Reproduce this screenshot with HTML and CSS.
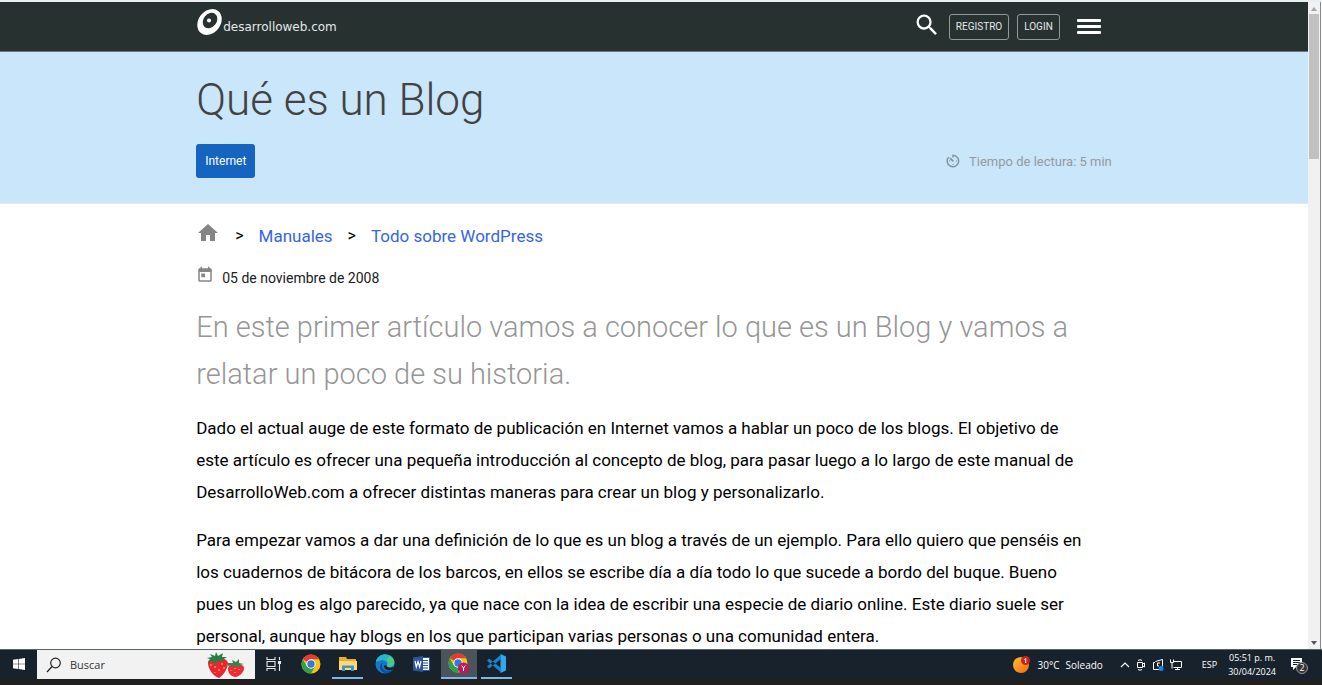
FILE: index.html
```html
<!DOCTYPE html>
<html lang="es">
<head>
<meta charset="utf-8">
<meta name="viewport" content="width=device-width, initial-scale=1">
<title>Qué es un Blog</title>
<link rel="stylesheet" href="styles.css">
</head>
<body>
<div class="browser">
  <div class="page">
    <header class="site-header">
      <div class="container header-row">
        <a class="logo" href="#">
          <svg width="27" height="28" viewBox="0 0 27 28" aria-hidden="true">
            <g transform="rotate(38 13.500 14)">
              <ellipse cx="13.500" cy="14" rx="11" ry="14" fill="#fff"/>
              <ellipse cx="13" cy="12.500" rx="6.600" ry="8.400" fill="#263130"/>
            </g>
            <circle cx="13" cy="12.500" r="2.100" fill="#fff"/>
          </svg>
          <span class="logo-text">desarrolloweb.com</span>
        </a>
        <nav class="header-actions">
          <button class="icon-button" aria-label="Buscar">
            <svg width="28" height="28" viewBox="0 0 24 24" fill="#fff"><path d="M15.500 14h-.79l-.28-.27A6.471 6.471 0 0 0 16 9.500 6.500 6.500 0 1 0 9.500 16c1.610 0 3.090-.59 4.230-1.570l.27.28v.79l5 4.990L20.490 19l-4.990-5zm-6 0C7.010 14 5 11.990 5 9.500S7.010 5 9.500 5 14 7.010 14 9.500 11.990 14 9.500 14z"/></svg>
          </button>
          <a class="outline-button" href="#">REGISTRO</a>
          <a class="outline-button" href="#">LOGIN</a>
          <button class="menu-button" aria-label="Menú"><span></span><span></span><span></span></button>
        </nav>
      </div>
    </header>
    <section class="hero">
      <div class="container">
        <h1 class="title">Qué es un Blog</h1>
        <div class="hero-meta">
          <a class="tag" href="#">Internet</a>
          <p class="reading">
            <svg width="14" height="14" viewBox="0 0 24 24" fill="none" stroke="#84919a" stroke-width="2.400" aria-hidden="true"><path d="M12 6V2.200A9.800 9.800 0 1 1 4.800 5.200"/><path d="M7 7l5.500 5.500" stroke-width="3"/><path d="M17 12h2M11 18h2M5 12h2" stroke-width="2"/></svg>
            <span>Tiempo de lectura: 5 min</span>
          </p>
        </div>
      </div>
    </section>
    <main class="container article">
      <nav class="breadcrumb" aria-label="Ruta">
        <a class="home" href="#" aria-label="Inicio"><svg width="24" height="24" viewBox="0 0 24 24" fill="#858585"><path d="M10 20v-6h4v6h5v-8h3L12 3 2 12h3v8z"/></svg></a>
        <span class="separator">&gt;</span>
        <a href="#">Manuales</a>
        <span class="separator">&gt;</span>
        <a href="#">Todo sobre WordPress</a>
      </nav>
      <p class="date">
        <svg width="18" height="18" viewBox="0 0 24 24" fill="#858585" aria-hidden="true"><path d="M19 3h-1V1h-2v2H8V1H6v2H5c-1.110 0-2 .9-2 2v14a2 2 0 0 0 2 2h14c1.100 0 2-.9 2-2V5c0-1.100-.9-2-2-2zm0 16H5V8h14v11zM7 10h5v5H7z"/></svg>
        <time datetime="2008-11-05">05 de noviembre de 2008</time>
      </p>
      <p class="lead">En este primer artículo vamos a conocer lo que es un Blog y vamos a relatar un poco de su historia.</p>
      <p class="text">Dado el actual auge de este formato de publicación en Internet vamos a hablar un poco de los blogs. El objetivo de este artículo es ofrecer una pequeña introducción al concepto de blog, para pasar luego a lo largo de este manual de DesarrolloWeb.com a ofrecer distintas maneras para crear un blog y personalizarlo.</p>
      <p class="text">Para empezar vamos a dar una definición de lo que es un blog a través de un ejemplo. Para ello quiero que penséis en los cuadernos de bitácora de los barcos, en ellos se escribe día a día todo lo que sucede a bordo del buque. Bueno pues un blog es algo parecido, ya que nace con la idea de escribir una especie de diario online. Este diario suele ser personal, aunque hay blogs en los que participan varias personas o una comunidad entera.</p>
    </main>
  </div>
  <div class="scrollbar" aria-hidden="true">
    <span class="arrow arrow-up"></span>
    <span class="thumb"></span>
    <span class="arrow arrow-down"></span>
  </div>
</div>
<footer class="taskbar">
  <button class="task start" aria-label="Inicio">
    <svg width="12" height="12" viewBox="0 0 12 12" fill="#fff"><path d="M0 1.700l5-.7v4.700H0zM5.600.9L12 0v5.700H5.600zM0 6.300h5V11l-5-.7zM5.600 6.300H12V12l-6.400-.9z"/></svg>
  </button>
  <div class="search">
    <svg width="16" height="16" viewBox="0 0 16 16" fill="none" stroke="#222" stroke-width="1.200" aria-hidden="true"><circle cx="9.500" cy="6" r="4.800"/><path d="M6 9.500L1 15"/></svg>
    <input type="text" placeholder="Buscar" aria-label="Buscar">
    <svg width="38" height="26" viewBox="0 0 38 26" aria-hidden="true">
      <path d="M1 11c0-4 5-6 9-5 5-1 10 1 11 5 0 5-5 13-9 15C6 24 1 17 1 11z" fill="#ea2633"/>
      <path d="M21 17c0-4 4-5 8-5s8 1 8 4c0 4-4 8-8 9-5 0-8-4-8-8z" fill="#ef2b35"/>
      <path d="M0 6l5-1-2-3 5 2 1-4 2 4 5-3-1 4 5 0-5 3 2 2-6-1-3 3-2-3-5 2 2-4z" fill="#287f45"/>
      <path d="M21 11l5 0-1-3 4 2 3-3 0 4 5 1-4 1 1 2-5-1-3 2-1-3-4 1z" fill="#36834b"/>
      <path d="M4 12v2M8 14v2M15 11v2M12 17v2M17 15v2M8 20v1M24 18v1M28 20v1M32 17v1M28 16v1" stroke="#ffb04d" stroke-width="1.200"/>
    </svg>
  </div>
  <nav class="tasks">
    <button class="task" aria-label="Vista de tareas">
      <svg width="16" height="14" viewBox="0 0 16 14" fill="none" stroke="#e5e7e9" stroke-width="1.100"><path d="M1 0v2.500h8V0M1 14v-2.500h8V14M1 4.500h8v5H1zM13.500 0v3M13.500 7v7"/><path d="M12.500 4.500h2v2h-2z" fill="#e5e7e9"/></svg>
    </button>
    <button class="task" aria-label="Chrome">
      <svg width="20" height="20" viewBox="0 0 20 20"><circle cx="10" cy="10" r="9.500" fill="#fbc116"/><path d="M10 10L1.770 5.250A9.500 9.500 0 0 1 18.230 5.250H10z" fill="#e33b2e"/><path d="M1.770 5.250A9.500 9.500 0 0 0 10 19.500l4.100-7.100L10 10 5.900 12.400z" fill="#2da24c"/><circle cx="10" cy="10" r="4.700" fill="#fff"/><circle cx="10" cy="10" r="3.700" fill="#3478df"/></svg>
    </button>
    <button class="task open" aria-label="Explorador de archivos">
      <svg width="18" height="16" viewBox="0 0 18 16"><path d="M0 1h7l1 2h9v11H0z" fill="#e8ad31"/><path d="M0 5h18v9H0z" fill="#ffda70"/><path d="M3 15V9.500h12V15h-3v-3H6v3z" fill="#3b95d5"/></svg>
    </button>
    <button class="task" aria-label="Edge">
      <svg width="20" height="20" viewBox="0 0 20 20"><circle cx="10" cy="10" r="9.500" fill="#1678c8"/><path d="M1 8C2 3 6 .5 10.500.5c5.500 0 9 4 9 7.800 0 3.200-2.500 4.700-5 4.700-2 0-3.500-.8-2.300-2.200C13.500 8 10.500 6 7.500 6 4.500 6 2 7 1 8z" fill="#4bc98b"/><path d="M1 8C2 3 6 .5 10 .5c2 0 4 .6 5 1.500C12 4 12 5 12 8 10 5.500 4 5 1 8z" fill="#24b4d4"/><path d="M8 8.500c-3 3.500.5 9.500 7 8.500l3-1.500C14 21 6 20 5 14c-.3-3 1-5 3-5.500z" fill="#114e99"/><path d="M11.500 11c-.5 3 4 3.500 8 1.500l-1 2.500c-4 2.500-10 1-9.500-3.500z" fill="#18222c"/></svg>
    </button>
    <button class="task" aria-label="Word">
      <svg width="17" height="16" viewBox="0 0 17 16"><path d="M8 1.500h8.500v13H8z" fill="#f2f5fa" stroke="#2b579a"/><path d="M10 4.500h5M10 7h5M10 9.500h5M10 12h5" stroke="#2b579a"/><path d="M0 1.500L10 0v16L0 14.500z" fill="#2b579a"/><path d="M2 5l1.300 6L5 5.500 6.600 11 8 5" fill="none" stroke="#fff" stroke-width="1.200"/></svg>
    </button>
    <button class="task open active" aria-label="Chrome, perfil Y">
      <svg width="22" height="22" viewBox="0 0 22 22"><circle cx="10" cy="10" r="9.500" fill="#fbc116"/><path d="M10 10L1.770 5.250A9.500 9.500 0 0 1 18.230 5.250H10z" fill="#e33b2e"/><path d="M1.770 5.250A9.500 9.500 0 0 0 10 19.500l4.100-7.100L10 10 5.900 12.400z" fill="#2da24c"/><circle cx="10" cy="10" r="4.700" fill="#fff"/><circle cx="10" cy="10" r="3.700" fill="#3478df"/><circle cx="15.500" cy="15" r="5.500" fill="#c2185b"/><path d="M13.700 12.500l1.800 2.700 1.800-2.700M15.500 15v3" fill="none" stroke="#fff"/></svg>
    </button>
    <button class="task open" aria-label="Visual Studio Code">
      <svg width="19" height="19" viewBox="0 0 19 19"><path d="M13.500 0L19 2.500v14L13.500 19z" fill="#2fa8ee"/><path d="M14 .5L0 12.500l2 2L14 5zM14 18.500L0 6.500l2-2L14 14z" fill="#1683ca"/></svg>
    </button>
  </nav>
  <div class="tray">
    <button class="weather">
      <svg width="18" height="17" viewBox="0 0 18 17" aria-hidden="true"><defs><linearGradient id="sun" x1="0" y1="0" x2="1" y2="1"><stop offset="0" stop-color="#ffbd36"/><stop offset="1" stop-color="#f26a0a"/></linearGradient></defs><circle cx="8" cy="9" r="8" fill="url(#sun)"/><circle cx="12.500" cy="4.500" r="4.500" fill="#c9251d"/><path d="M11.500 3.500l1.200-1v4.500" fill="none" stroke="#fff"/></svg>
      <span>30°C</span><span>Soleado</span>
    </button>
    <div class="status" aria-hidden="true">
      <svg width="10" height="14" viewBox="0 0 10 14" fill="none" stroke="#fff" stroke-width="1.100"><path d="M1 9l4-4 4 4"/></svg>
      <svg width="10" height="14" viewBox="0 0 10 14" fill="none" stroke="#fff"><path d="M1.500 4.500h5v5h-5zM6.500 6l2-1v4l-2-1M2 2.500Q4 1 6 2.500M2 11.500Q4 13 6 11.500"/></svg>
      <svg width="12" height="14" viewBox="0 0 12 14" fill="none" stroke="#fff"><path d="M7 11.500H1.500v-7H3M3.500 3.500l7-2v7M8 5H5.500v3H7"/><circle cx="9" cy="10.500" r="2.500" fill="#1687e0" stroke="none"/></svg>
      <svg width="12" height="14" viewBox="0 0 12 14" fill="none" stroke="#fff"><path d="M4 3.500h7.500v6H3.500M7.500 9.500v2M5 11.500h5M.5 1.500v3h3v-3M2 4.500v6"/></svg>
    </div>
    <button class="language">ESP</button>
    <time class="clock" datetime="2024-04-30T17:51"><span>05:51 p. m.</span><span>30/04/2024</span></time>
    <button class="notices" aria-label="Notificaciones">
      <svg width="18" height="18" viewBox="0 0 18 18"><path d="M1 2h11v9H6l-3 3v-3H1z" fill="#fff"/><path d="M3 4.500h7M3 6.500h7M3 8.500h4" stroke="#18222c"/></svg>
      <span class="badge">2</span>
    </button>
  </div>
</footer>
</body>
</html>
```
FILE: styles.css
```css
* { box-sizing: border-box; }

body {
  display: flex;
  flex-direction: column;
  height: 100vh;
  margin: 0;
  overflow: hidden;
  background: #fff;
  color: #000;
  font-family: Roboto, "Liberation Sans", sans-serif;
}

h1, p { margin: 0; }
a { color: #3565e8; text-decoration: none; }
button { border: 0; padding: 0; background: none; color: inherit; font: inherit; }
svg { display: block; flex: none; }

.browser {
  display: flex;
  flex: 1;
  min-height: 0;
  border-top: 2px solid #e9eef3;
}
.page { flex: 1; min-width: 0; overflow: hidden; }
.container { width: 70%; margin: 0 auto; }

.site-header {
  background: #263130;
  border-bottom: 1px solid #65777f;
}
.header-row {
  display: flex;
  align-items: center;
  justify-content: space-between;
  height: 49px;
}
.logo { display: flex; align-items: center; margin-bottom: 9px; color: #e4e8e8; }
.logo-text { margin-top: 9px; font: 12px "DejaVu Sans", sans-serif; }
.header-actions { display: flex; align-items: center; gap: 8px; margin-right: 11px; color: #e6e9e9; }
.icon-button { margin-bottom: 4px; }
.outline-button {
  padding: 0 6px;
  border: 1px solid #929998;
  border-radius: 3px;
  color: inherit;
  font-size: 10px;
  line-height: 24px;
}
.menu-button { display: grid; gap: 3px; width: 24px; margin-left: 9px; }
.menu-button span { height: 3px; border-radius: 1px; background: #fff; }

.hero { padding: 20px 0 25px; background: #c9e6fb; border-bottom: 1px solid #e2e9ee; }
.title { color: #424242; font-size: 44px; font-weight: 300; line-height: 56px; }
.hero-meta { display: flex; align-items: center; justify-content: space-between; margin-top: 16px; }
.tag { padding: 0 9px; border-radius: 3px; background: #1565c0; color: #fff; font-size: 12px; line-height: 34px; }
.reading { display: flex; align-items: center; gap: 9px; color: #949a9f; font-size: 13px; }

.article { padding-top: 16px; }
.breadcrumb { display: flex; align-items: center; gap: 15px; font-size: 17px; line-height: 32px; }
.home { margin-bottom: 6px; }
.separator { font-size: 16px; }
.date { display: flex; align-items: center; gap: 8px; margin-top: 14px; color: #202020; font-size: 14px; line-height: 24px; }
.date svg { margin-bottom: 6px; }
.lead { margin-top: 14px; color: #969696; font-size: 29px; font-weight: 300; line-height: 47px; }
.text { margin-top: 14px; padding-right: 24px; font-size: 17px; line-height: 32px; }
.text + .text { margin-top: 16px; }

.scrollbar {
  display: flex;
  flex-direction: column;
  align-items: center;
  width: 13px;
  margin-right: 1px;
  border-right: 1px solid #888;
  background: #f1f1f1;
}
.arrow { width: 6px; height: 4px; }
.arrow-up { margin: 5px 0 3px; background: #a5a5a5; clip-path: polygon(50% 0, 100% 100%, 0 100%); }
.arrow-down { margin: auto 0 4px; background: #555; clip-path: polygon(0 0, 100% 0, 50% 100%); }
.thumb { width: 10px; height: 22.400%; background: #c1c1c1; }

.taskbar {
  display: flex;
  height: 36px;
  border-top: 1px solid #59636a;
  border-bottom: 6px solid #202020;
  background: #18222c;
  color: #fff;
  font: 11px "Open Sans", "Noto Sans", sans-serif;
}
.task { display: grid; place-items: center; width: 31px; border-bottom: 1px solid transparent; }
.start { width: 37px; }
.search {
  display: flex;
  align-items: center;
  gap: 8px;
  width: 218px;
  padding: 0 10px 0 9px;
  background: #f2f2f2;
}
.search input { flex: 1; min-width: 0; padding: 0; border: 0; outline: 0; background: none; color: #333; font: inherit; }
.search input::placeholder { color: #333; opacity: 1; }
.tasks { display: flex; gap: 6px; margin-left: 3px; }
.task.open { border-bottom: 2px solid #76b9ed; }
.active { width: 36px; margin: 0 -2px 0 -2px; background: #4b535b; }
.tray { display: flex; align-items: center; margin-left: auto; padding-right: 14px; }
.weather { display: flex; align-items: center; gap: 6px; font-size: 10px; }
.status { display: flex; gap: 6px; margin-left: 17px; }
.language { margin-left: 20px; font-size: 9px; }
.clock { display: grid; margin-left: 11px; font-size: 9px; line-height: 14px; text-align: center; }
.notices { position: relative; margin-left: 14px; }
.badge {
  position: absolute;
  top: 6px;
  left: 6px;
  width: 12px;
  height: 12px;
  border: 1px solid #999;
  border-radius: 50%;
  background: #333;
  font-size: 9px;
  line-height: 10px;
  text-align: center;
}
```
